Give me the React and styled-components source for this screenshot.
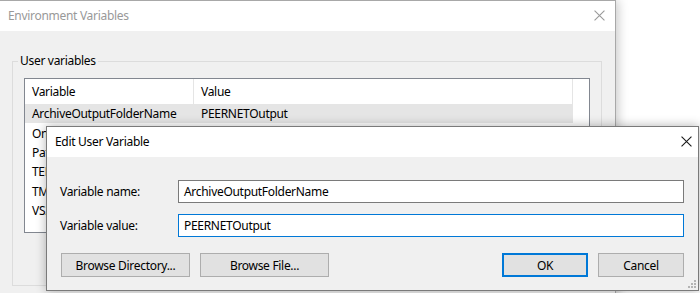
import React from 'react'
import styled, { createGlobalStyle } from 'styled-components'

const GlobalStyle = createGlobalStyle`
  html, body {
    margin: 0;
    padding: 0;
    background: #ffffff;
  }
  * {
    box-sizing: border-box;
  }
`

const variables = [
  { name: 'ArchiveOutputFolderName', value: 'PEERNETOutput', selected: true },
  { name: 'OneDrive', value: '' },
  { name: 'Path', value: '' },
  { name: 'TEMP', value: '' },
  { name: 'TMP', value: '' },
  { name: 'VS2019', value: '' },
]

function CloseIcon({ color, size }) {
  return (
    <svg width={size} height={size} viewBox="0 0 10 10">
      <path d="M0.5 0.5 L9.5 9.5 M9.5 0.5 L0.5 9.5" stroke={color} strokeWidth="1" fill="none" />
    </svg>
  )
}

function Grip() {
  return (
    <svg width="10" height="10" viewBox="0 0 10 10">
      <rect x="7" y="1" width="2" height="2" fill="#b4b4b4" />
      <rect x="4" y="4" width="2" height="2" fill="#b4b4b4" />
      <rect x="7" y="4" width="2" height="2" fill="#b4b4b4" />
      <rect x="1" y="7" width="2" height="2" fill="#b4b4b4" />
      <rect x="4" y="7" width="2" height="2" fill="#b4b4b4" />
      <rect x="7" y="7" width="2" height="2" fill="#b4b4b4" />
    </svg>
  )
}

export default function App() {
  return (
    <>
      <GlobalStyle />
      <Desktop>
        <Window>
          <TitleBar>
            <WindowTitle $inactive>Environment Variables</WindowTitle>
            <CloseButton $right={10}>
              <CloseIcon color="#9a9a9a" size={11} />
            </CloseButton>
          </TitleBar>
          <WindowBody>
            <GroupBox>
              <Legend>User variables</Legend>
              <ListView>
                <HeaderRow>
                  <HeaderCell $width={169}>Variable</HeaderCell>
                  <HeaderCell $width={379}>Value</HeaderCell>
                </HeaderRow>
                {variables.map((v) => (
                  <Row key={v.name} $selected={v.selected}>
                    <Cell $width={169}>{v.name}</Cell>
                    <Cell $width={379}>{v.value}</Cell>
                  </Row>
                ))}
              </ListView>
            </GroupBox>
          </WindowBody>
        </Window>

        <Dialog>
          <TitleBar>
            <WindowTitle>Edit User Variable</WindowTitle>
            <CloseButton $right={6}>
              <CloseIcon color="#1a1a1a" size={11} />
            </CloseButton>
          </TitleBar>
          <DialogBody>
            <FieldRow>
              <FieldLabel>Variable name:</FieldLabel>
              <TextBox>ArchiveOutputFolderName</TextBox>
            </FieldRow>
            <FieldRow>
              <FieldLabel>Variable value:</FieldLabel>
              <TextBox $focused>PEERNETOutput</TextBox>
            </FieldRow>
            <ButtonBar>
              <ButtonGroup>
                <Button $width={129}>Browse Directory...</Button>
                <Button $width={129}>Browse File...</Button>
              </ButtonGroup>
              <ButtonGroup>
                <Button $width={86} $default>OK</Button>
                <Button $width={86}>Cancel</Button>
              </ButtonGroup>
            </ButtonBar>
            <GripCorner>
              <Grip />
            </GripCorner>
          </DialogBody>
        </Dialog>
      </Desktop>
    </>
  )
}

const Desktop = styled.div`
  position: relative;
  width: 700px;
  height: 293px;
  overflow: hidden;
  background: #ffffff;
  font-family: "Noto Sans", "Open Sans", sans-serif;
  font-size: 12px;
  letter-spacing: -0.3px;
  color: #000000;
`
const Window = styled.div`
  position: absolute;
  left: -1px;
  top: 0;
  width: 617px;
  height: 330px;
  border: 1px solid #a8a8a8;
  background: #f0f0f0;
  box-shadow: 2px 0 10px rgba(0, 0, 0, 0.22);
  display: flex;
  flex-direction: column;
`
const TitleBar = styled.div`
  position: relative;
  height: 30px;
  flex-shrink: 0;
  background: #ffffff;
  display: flex;
  align-items: center;
  padding-left: 8px;
`
const WindowTitle = styled.div`
  color: ${(p) => (p.$inactive ? '#999999' : '#000000')};
  line-height: 1;
`
const CloseButton = styled.div`
  position: absolute;
  right: ${(p) => p.$right}px;
  top: 9px;
  display: flex;
`
const WindowBody = styled.div`
  flex: 1;
  padding: 22px 13px 0 12px;
`
const GroupBox = styled.fieldset`
  margin: 0;
  padding: 9px 11px 52px 11px;
  border: 1px solid #dcdcdc;
  min-width: 0;
`
const Legend = styled.legend`
  padding: 0 2px;
  margin-left: -6px;
  line-height: 16px;
`
const ListView = styled.div`
  width: 566px;
  height: 155px;
  border: 1px solid #828790;
  background: #ffffff;
  overflow: hidden;
`
const HeaderRow = styled.div`
  display: flex;
  height: 25px;
  align-items: stretch;
`
const HeaderCell = styled.div`
  width: ${(p) => p.$width}px;
  padding-left: 7px;
  display: flex;
  align-items: center;
  border-right: 1px solid #e5e5e5;
`
const Row = styled.div`
  display: flex;
  width: 548px;
  height: 19.4px;
  align-items: center;
  background: ${(p) => (p.$selected ? '#e5e5e5' : 'transparent')};
`
const Cell = styled.div`
  width: ${(p) => p.$width}px;
  padding-left: 7px;
  white-space: nowrap;
  overflow: hidden;
`
const Dialog = styled.div`
  position: absolute;
  left: 46px;
  top: 126px;
  width: 653px;
  height: 165px;
  border: 1px solid #7a7a7a;
  background: #f0f0f0;
  box-shadow: 0 0 10px rgba(0, 0, 0, 0.3);
  display: flex;
  flex-direction: column;
`
const DialogBody = styled.div`
  position: relative;
  flex: 1;
  padding: 23px 14px 0 13px;
  display: flex;
  flex-direction: column;
`
const FieldRow = styled.div`
  display: flex;
  align-items: center;
  margin-bottom: 11px;
`
const FieldLabel = styled.div`
  width: 118px;
`
const TextBox = styled.div`
  width: 506px;
  height: 23px;
  background: #ffffff;
  border: 1px solid ${(p) => (p.$focused ? '#0078d7' : '#7a7a7a')};
  display: flex;
  align-items: center;
  padding-left: 5px;
`
const ButtonBar = styled.div`
  display: flex;
  justify-content: space-between;
  margin-top: 5px;
  padding-left: 1px;
`
const ButtonGroup = styled.div`
  display: flex;
  gap: 10px;
`
const Button = styled.div`
  width: ${(p) => p.$width}px;
  height: 24px;
  background: #e1e1e1;
  border: ${(p) => (p.$default ? '2px solid #0078d7' : '1px solid #adadad')};
  display: flex;
  align-items: center;
  justify-content: center;
`
const GripCorner = styled.div`
  position: absolute;
  right: 1px;
  bottom: 1px;
  display: flex;
`
